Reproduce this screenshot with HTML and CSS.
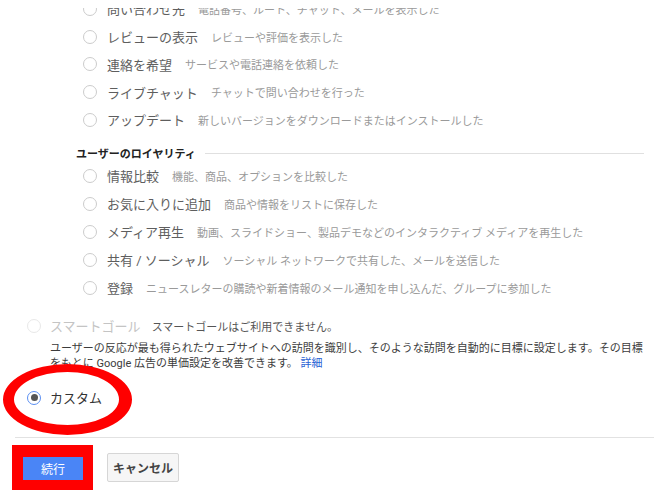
FILE: index.html
```html
<!DOCTYPE html>
<html lang="ja">
<head>
<meta charset="utf-8">
<title>目標設定</title>
<link rel="stylesheet" href="styles.css">
</head>
<body>
<div class="clip">
<div class="page">
  <div class="group group-first">
    <div class="opt"><span class="radio"></span><span class="label">問い合わせ先</span><span class="desc">電話番号、ルート、チャット、メールを表示した</span></div>
    <div class="opt"><span class="radio"></span><span class="label">レビューの表示</span><span class="desc">レビューや評価を表示した</span></div>
    <div class="opt"><span class="radio"></span><span class="label">連絡を希望</span><span class="desc">サービスや電話連絡を依頼した</span></div>
    <div class="opt"><span class="radio"></span><span class="label">ライブチャット</span><span class="desc">チャットで問い合わせを行った</span></div>
    <div class="opt"><span class="radio"></span><span class="label">アップデート</span><span class="desc">新しいバージョンをダウンロードまたはインストールした</span></div>
  </div>
  <div class="group">
    <div class="group-head"><h3>ユーザーのロイヤリティ</h3><span class="rule"></span></div>
    <div class="opt"><span class="radio"></span><span class="label">情報比較</span><span class="desc">機能、商品、オプションを比較した</span></div>
    <div class="opt"><span class="radio"></span><span class="label">お気に入りに追加</span><span class="desc">商品や情報をリストに保存した</span></div>
    <div class="opt"><span class="radio"></span><span class="label">メディア再生</span><span class="desc">動画、スライドショー、製品デモなどのインタラクティブ メディアを再生した</span></div>
    <div class="opt"><span class="radio"></span><span class="label">共有 / ソーシャル</span><span class="desc">ソーシャル ネットワークで共有した、メールを送信した</span></div>
    <div class="opt"><span class="radio"></span><span class="label">登録</span><span class="desc">ニュースレターの購読や新着情報のメール通知を申し込んだ、グループに参加した</span></div>
  </div>

  <div class="goal goal-smart"><span class="radio radio-disabled"></span><span class="goal-label disabled">スマートゴール</span><span class="goal-note">スマートゴールはご利用できません。</span></div>
  <p class="goal-text">ユーザーの反応が最も得られたウェブサイトへの訪問を識別し、そのような訪問を自動的に目標に設定します。その目標をもとに Google 広告の単価設定を改善できます。 <a class="link" href="#">詳細</a></p>

  <div class="goal goal-custom"><span class="radio radio-checked"><span class="dot"></span></span><span class="goal-label">カスタム</span><span class="mark-ellipse"></span></div>

  <div class="divider"></div>

  <div class="actions">
    <div class="mark-box"><button class="btn-primary">続行</button></div>
    <button class="btn-cancel">キャンセル</button>
  </div>
</div>
</div>
</body>
</html>
```
FILE: styles.css
```css
html, body {
  margin: 0;
  padding: 0;
  overflow: hidden;
  background: #fff;
}
body {
  font-family: Roboto, "Noto Sans CJK JP", sans-serif;
}
.clip {
  margin-top: 8px;
  overflow: hidden;
}
.page {
  margin-top: -13px;
  padding: 0 11px 0 15px;
}
.group {
  padding-left: 61px;
}
.opt {
  display: flex;
  align-items: center;
  height: 28px;
  padding-left: 7px;
}
.group-first .opt {
  height: 27.75px;
}
.radio {
  width: 14px;
  height: 14px;
  box-sizing: border-box;
  border: 1px solid #cccccc;
  border-radius: 50%;
  flex: none;
  margin-right: 10px;
  display: flex;
  align-items: center;
  justify-content: center;
}
.label {
  font-size: 13px;
  color: #5e5e5e;
  white-space: nowrap;
}
.desc {
  font-size: 11px;
  color: #9a9a9a;
  margin-left: 13px;
  white-space: nowrap;
}
.group-head {
  display: flex;
  align-items: center;
  height: 17px;
  margin-top: 11px;
}
.group-head h3 {
  margin: 0;
  font-size: 11px;
  font-weight: bold;
  color: #222;
  white-space: nowrap;
}
.group-head .rule {
  flex: 1;
  border-top: 1px solid #e0e0e0;
  margin-left: 9px;
  margin-right: 10px;
}
.goal {
  display: flex;
  align-items: center;
  height: 20px;
  padding-left: 12px;
}
.goal .radio {
  margin-right: 9px;
}
.goal-smart {
  margin-top: 14px;
}
.radio-disabled {
  border-color: #e8e8e8;
}
.goal-label {
  font-size: 13px;
  color: #333;
  white-space: nowrap;
}
.goal-label.disabled {
  color: #c4c4c4;
}
.goal-note {
  font-size: 11px;
  color: #555;
  margin-left: 11px;
  white-space: nowrap;
}
.goal-text {
  margin: 5px 0 0 35px;
  width: 600px;
  font-size: 11px;
  line-height: 15px;
  color: #3c3c3c;
}
.link {
  color: #2962d4;
  text-decoration: none;
}
.goal-custom {
  position: relative;
  margin-top: 17px;
}
.radio-checked {
  border-color: #5b8ff2;
}
.radio-checked .dot {
  width: 7px;
  height: 7px;
  border-radius: 50%;
  background: #555;
}
.mark-ellipse {
  position: absolute;
  left: -12px;
  top: -24px;
  width: 129px;
  height: 71px;
  box-sizing: border-box;
  border-style: solid;
  border-color: #ff0000;
  border-width: 8px 13px 10px 11px;
  border-radius: 50%;
}
.divider {
  margin-top: 29px;
  border-top: 1px solid #e2e2e2;
}
.actions {
  display: flex;
  align-items: flex-start;
  margin-top: 7px;
}
.mark-box {
  margin-left: -3px;
  width: 81px;
  height: 45px;
  box-sizing: border-box;
  padding: 12px 10px 0 11px;
  background: #ff0000;
}
.btn-primary {
  display: block;
  width: 60px;
  height: 23px;
  border: none;
  padding: 0;
  background: #4a85f6;
  color: #fff;
  font-family: Roboto, "Noto Sans CJK JP", sans-serif;
  font-size: 12px;
}
.btn-cancel {
  margin-left: 14px;
  margin-top: 8px;
  width: 72px;
  height: 29px;
  padding: 0;
  background: #f6f6f6;
  border: 1px solid #d6d6d6;
  border-radius: 2px;
  color: #444;
  font-family: Roboto, "Noto Sans CJK JP", sans-serif;
  font-size: 12px;
  font-weight: bold;
}
```
